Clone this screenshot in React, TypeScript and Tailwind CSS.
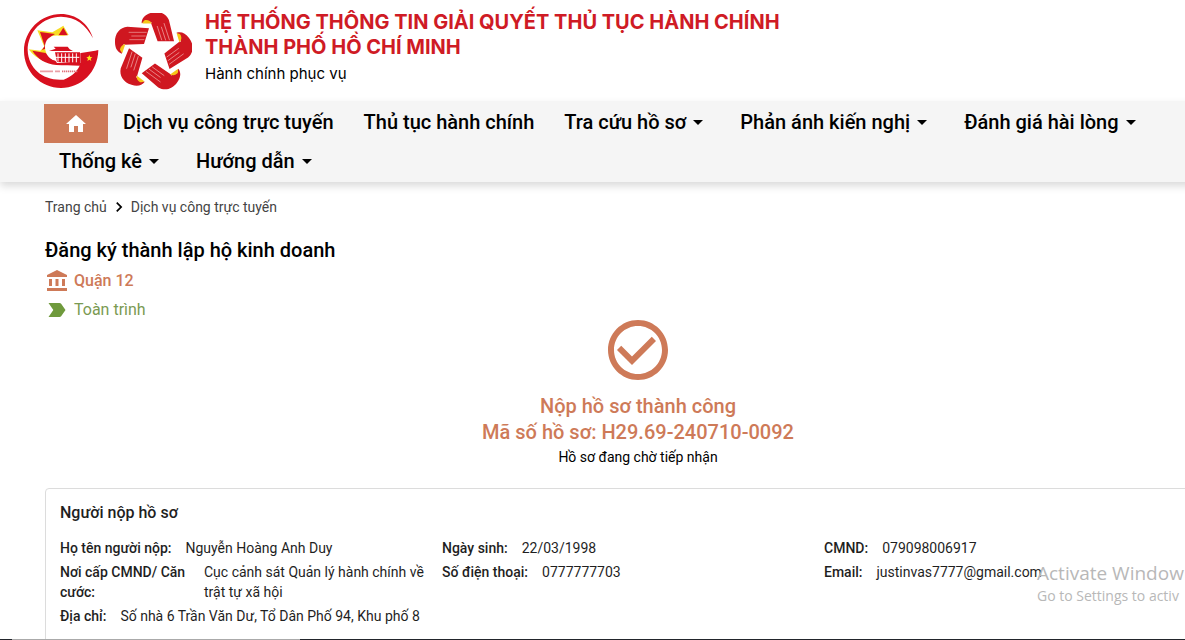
import {
  MdAccountBalance,
  MdArrowDropDown,
  MdCheckCircleOutline,
  MdHome,
  MdKeyboardArrowRight,
  MdLabelImportant,
} from "react-icons/md";

type NavItem = { label: string; menu?: boolean };
type Detail = { label: string; value: string; wrap?: boolean };

const NAV: NavItem[] = [
  { label: "Dịch vụ công trực tuyến" },
  { label: "Thủ tục hành chính" },
  { label: "Tra cứu hồ sơ", menu: true },
  { label: "Phản ánh kiến nghị", menu: true },
  { label: "Đánh giá hài lòng", menu: true },
  { label: "Thống kê", menu: true },
  { label: "Hướng dẫn", menu: true },
];

const APPLICANT: Detail[][] = [
  [
    { label: "Họ tên người nộp:", value: "Nguyễn Hoàng Anh Duy" },
    { label: "Nơi cấp CMND/ Căn cước:", value: "Cục cảnh sát Quản lý hành chính về trật tự xã hội", wrap: true },
    { label: "Địa chỉ:", value: "Số nhà 6 Trần Văn Dư, Tổ Dân Phố 94, Khu phố 8" },
  ],
  [
    { label: "Ngày sinh:", value: "22/03/1998" },
    { label: "Số điện thoại:", value: "0777777703" },
  ],
  [
    { label: "CMND:", value: "079098006917" },
    { label: "Email:", value: "justinvas7777@gmail.com" },
  ],
];

function CityLogo() {
  return (
    <svg viewBox="40 40 228 228" className="size-[76px] shrink-0" aria-hidden="true">
      <path
        d="M250 116C237 71 198 43 154 43C93 43 43 93 43 154C43 216 93 265 154 265C216 265 264 217 266 152L205 170L213 190C206 212 190 229 162 240C102 245 56 208 54 152C54 96 99 51 154 51C197 51 230 76 250 116Z"
        fill="#d8101f"
      />
      <path d="M57 149L92 153L104 141L83 92L128 98L150 85L161 78L177 106L132 116L114 152L128 184L162 188L205 176L206 184C174 204 96 202 57 149Z" fill="#f7dc24" />
      <path d="M68 153L108 160L130 181C156 189 190 177 209 161L266 152C250 176 234 193 210 198C184 197 160 198 140 196C108 193 84 178 68 153Z" fill="#d8101f" />
      <path d="M91 97L136 103C118 112 108 127 107 147L97 151L105 139Z" fill="#d8101f" />
      <path d="M161 84L174 107L147 106Z" fill="#d8101f" />
      <path d="M106 144C105 121 121 106 146 108L177 108L156 112C133 117 124 132 124 153L135 182C118 178 108 164 106 144Z" fill="#fff" />
      <path d="M124 130L212 130V190L142 190L128 170Z" fill="#fff" />
      <path d="M118 154L138 147L132 141L174 141L180 149L190 154ZM136 158H211V192L142 187Z" fill="#d8101f" />
      <path d="M145 161V186M156 161V188M167 161V188M178 161V188M189 161V188M200 161V188M138 173H209" stroke="#fff" strokeWidth="3" />
      <path d="M239 166L242 172L248 173L243 177L245 184L239 180L233 184L235 177L230 173L236 172Z" fill="#ffe51f" />
      <path d="M92 215H130M137 215H151M157 215H205" stroke="#e0707a" strokeWidth="5" strokeDasharray="4 2" />
    </svg>
  );
}

function HandsLogo() {
  return (
    <svg viewBox="312 41 234 234" className="size-[78px] shrink-0" aria-hidden="true">
      {[0, 72, 144, 216, 288].map((angle) => (
        <g key={angle} transform={`rotate(${angle} 428 158)`}>
          <path d="M417 87L352 82C330 84 314 102 315 128C315 146 322 158 336 163C333 150 337 140 342 133L344 136L402 134Z" fill="#cf1720" />
          <path d="M330 150C332 140 338 136 346 134L337 161C333 157 330 154 330 150Z" fill="#f6c619" />
          <path d="M356 99L410 99M364 110L407 110M358 121L403 121" stroke="#f0a9a8" strokeWidth="2" />
        </g>
      ))}
    </svg>
  );
}

function DetailRow({ label, value, wrap }: Detail) {
  return (
    <div className="flex leading-5">
      <dt className={wrap ? "w-36 shrink-0 pr-4 font-medium" : "shrink-0 pr-3.5 font-medium"}>{label}</dt>
      <dd>{value}</dd>
    </div>
  );
}

export default function App() {
  return (
    <div className="relative flex h-screen flex-col overflow-hidden bg-white font-[Roboto,sans-serif] text-black">
      <div className="min-w-[1276px] flex-1 overflow-hidden">
        <header className="flex h-[101px] items-start pt-2.5 pl-[23px]">
          <div className="flex gap-[15px] pt-[3px]">
            <CityLogo />
            <HandsLogo />
          </div>
          <div className="ml-[13px] font-[Inter,sans-serif]">
            <h1 className="text-xl leading-[25px] font-bold text-[#cf1b25]">
              HỆ THỐNG THÔNG TIN GIẢI QUYẾT THỦ TỤC HÀNH CHÍNH
              <br />
              THÀNH PHỐ HỒ CHÍ MINH
            </h1>
            <p className="mt-1 text-[15px] leading-5">Hành chính phục vụ</p>
          </div>
        </header>

        <nav className="bg-[#f5f5f5] px-11 pt-[3px] shadow-[0_4px_8px_rgba(0,0,0,0.15)]">
          <ul className="flex flex-wrap text-xl leading-9 font-medium">
            <li>
              <a href="#home" aria-label="Trang chủ" className="flex h-[39px] w-16 items-center justify-center bg-[#ce7a58] text-white">
                <MdHome className="size-6" />
              </a>
            </li>
            {NAV.map((item) => (
              <li key={item.label} className="h-[39px]">
                {item.menu ? (
                  <button type="button" className="flex items-center px-[15px]">
                    {item.label}
                    <MdArrowDropDown className="size-6" />
                  </button>
                ) : (
                  <a href="#services" className="block px-[15px]">
                    {item.label}
                  </a>
                )}
              </li>
            ))}
          </ul>
        </nav>

        <main className="px-[45px] pt-[15px]">
          <div className="flex h-5 items-center text-sm text-[#444]">
            <a href="#home">Trang chủ</a>
            <MdKeyboardArrowRight className="mx-0.5 size-5 text-black" />
            <a href="#services">Dịch vụ công trực tuyến</a>
          </div>

          <h2 className="mt-5 text-xl leading-[26px] font-medium">Đăng ký thành lập hộ kinh doanh</h2>
          <div className="mt-1.5 flex items-center gap-[5px] leading-6 font-medium text-[#ce7a58]">
            <MdAccountBalance className="size-6" />
            Quận 12
          </div>
          <div className="mt-[5px] flex items-center gap-[5px] leading-6 text-[#7a9a52]">
            <MdLabelImportant className="size-6 text-[#6f9a3c]" />
            Toàn trình
          </div>

          <section className="-mt-2 flex flex-col items-center text-center">
            <MdCheckCircleOutline className="size-[72px] text-[#ce7a58]" />
            <div className="mt-[7px] text-xl leading-[26px] font-medium text-[#ce7a58]">
              <p>Nộp hồ sơ thành công</p>
              <p>Mã số hồ sơ: H29.69-240710-0092</p>
            </div>
            <p className="mt-0.5 text-sm leading-5">Hồ sơ đang chờ tiếp nhận</p>
          </section>

          <section className="mt-[21px] rounded-sm border border-[#dcdcdc] px-3.5 pt-3.5 pb-8 text-[#1f1f1f]">
            <h3 className="leading-5 font-medium">Người nộp hồ sơ</h3>
            <div className="mt-[15px] grid grid-cols-[382px_382px_1fr] text-sm">
              {APPLICANT.map((column) => (
                <dl key={column[0].label} className="space-y-1 pr-2">
                  {column.map((d) => (
                    <DetailRow key={d.label} {...d} />
                  ))}
                </dl>
              ))}
            </div>
          </section>
        </main>
      </div>

      <div className="flex h-px shrink-0 bg-[#22252b]">
        <div className="ml-3 w-72 bg-[#aaa]" />
      </div>

      <div className="absolute top-[560px] left-[1037px] font-['Open_Sans',sans-serif] whitespace-nowrap text-[#b8b8b8]">
        <p className="text-[19px] leading-[26px]">Activate Window</p>
        <p className="text-sm leading-5">Go to Settings to activ</p>
      </div>
    </div>
  );
}
